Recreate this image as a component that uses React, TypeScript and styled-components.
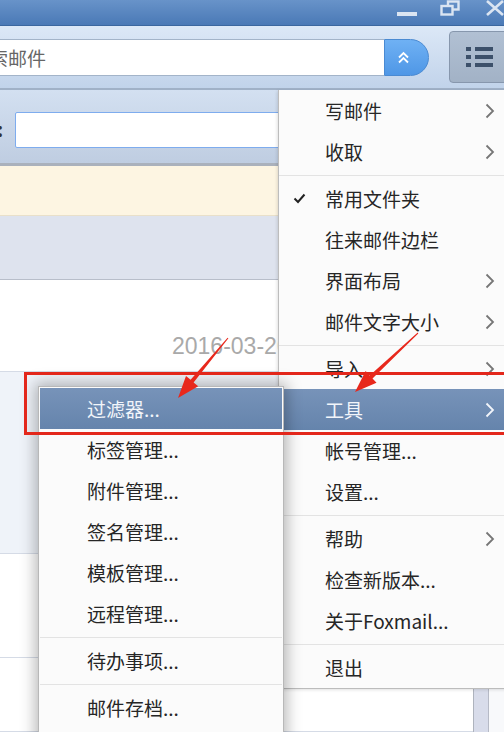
import React from 'react'
import styled, { createGlobalStyle, css } from 'styled-components'

const GlobalStyle = createGlobalStyle`
  html, body {
    margin: 0;
    padding: 0;
    background: #fff;
  }
  body {
    font-family: "Noto Sans CJK SC", "Noto Sans", sans-serif;
  }
  * {
    box-sizing: border-box;
  }
`

type MenuEntry = { label?: string; sub?: boolean; checked?: boolean; active?: boolean; sep?: boolean }

const mainItems: MenuEntry[] = [
  { label: '写邮件', sub: true },
  { label: '收取', sub: true },
  { sep: true },
  { label: '常用文件夹', checked: true },
  { label: '往来邮件边栏' },
  { label: '界面布局', sub: true },
  { label: '邮件文字大小', sub: true },
  { sep: true },
  { label: '导入', sub: true },
  { label: '工具', sub: true, active: true },
  { label: '帐号管理...' },
  { label: '设置...' },
  { sep: true },
  { label: '帮助', sub: true },
  { label: '检查新版本...' },
  { label: '关于Foxmail...' },
  { sep: true },
  { label: '退出' },
]

const toolItems: MenuEntry[] = [
  { label: '过滤器...', active: true },
  { label: '标签管理...' },
  { label: '附件管理...' },
  { label: '签名管理...' },
  { label: '模板管理...' },
  { label: '远程管理...' },
  { sep: true },
  { label: '待办事项...' },
  { sep: true },
  { label: '邮件存档...' },
  { label: '邮件导出...' },
]

const Chevron = ({ light }: { light?: boolean }) => (
  <svg width="10" height="16" viewBox="0 0 10 16">
    <path d="M1.5 1.5 L8 8 L1.5 14.5" fill="none" stroke={light ? '#f2f5fa' : '#767676'} strokeWidth="1.8" />
  </svg>
)

const renderItems = (items: MenuEntry[], sub: boolean) =>
  items.map((it, i) =>
    it.sep ? (
      <Separator key={i} />
    ) : (
      <MenuItem key={i} $active={it.active} $indent={sub ? 47 : 46}>
        {it.checked && (
          <CheckMark width="13" height="11" viewBox="0 0 13 11">
            <path d="M1.5 5.5 L5 9 L11.5 1.5" fill="none" stroke="#222" strokeWidth="2" />
          </CheckMark>
        )}
        <span>{it.label}</span>
        {it.sub && (
          <ChevronSlot>
            <Chevron light={it.active} />
          </ChevronSlot>
        )}
      </MenuItem>
    ),
  )

const App: React.FunctionComponent = () => {
  return (
    <>
      <GlobalStyle />
      <Window>
        <TitleBar>
          <WinControls>
            <svg width="20" height="16" viewBox="0 0 20 16">
              <rect x="0" y="12" width="20" height="4" fill="#dbe5f2" />
            </svg>
            <svg width="20" height="16" viewBox="0 0 20 16">
              <rect x="8" y="1.5" width="10.5" height="8" fill="none" stroke="#dbe5f2" strokeWidth="2.4" />
              <rect x="1.5" y="6" width="11" height="8.5" fill="#5683bd" stroke="#dbe5f2" strokeWidth="2.4" />
            </svg>
            <svg width="20" height="16" viewBox="0 0 20 16">
              <path d="M2 1 L18 15 M18 1 L2 15" stroke="#dbe5f2" strokeWidth="2.6" />
            </svg>
          </WinControls>
        </TitleBar>

        <Toolbar>
          <SearchField>
            <SearchText>搜索邮件</SearchText>
          </SearchField>
          <SearchButton>
            <svg width="11" height="13" viewBox="0 0 11 13">
              <path d="M1 6.5 L5.5 2 L10 6.5 M1 11.5 L5.5 7 L10 11.5" fill="none" stroke="#fff" strokeWidth="1.8" />
            </svg>
          </SearchButton>
          <MenuButton>
            <svg width="27" height="20" viewBox="0 0 27 20">
              <rect x="0" y="0" width="5" height="4" fill="#3c506a" />
              <rect x="9" y="0" width="18" height="4" fill="#3c506a" />
              <rect x="0" y="8" width="5" height="4" fill="#3c506a" />
              <rect x="9" y="8" width="18" height="4" fill="#3c506a" />
              <rect x="0" y="16" width="5" height="4" fill="#3c506a" />
              <rect x="9" y="16" width="18" height="4" fill="#3c506a" />
            </svg>
          </MenuButton>
        </Toolbar>

        <Body>
          <ListPane>
            <FilterBar>
              <FilterLabel>:</FilterLabel>
              <FilterInput />
            </FilterBar>
            <Notice />
            <ListHeader />
            <MailRow $height={92}>
              <MailDate>2016-03-26</MailDate>
            </MailRow>
            <MailRow $height={182} $tinted />
            <MailRow $height={104} />
            <MailRow />
          </ListPane>
          <Splitter />
          <ReadingPane />
        </Body>

        <MainMenu>{renderItems(mainItems, false)}</MainMenu>
        <SubMenu>{renderItems(toolItems, true)}</SubMenu>
        <Callout />
        <ArrowLayer width="504" height="732" viewBox="0 0 504 732">
          <polygon
            points="228.4,338.3 193.6,382.4 198.2,386.2 178,398 186,376 190.6,379.8 227.6,337.7"
            fill="#e8281c"
          />
          <polygon
            points="418.3,333.4 372.5,378.4 376.5,382.8 355,392 365.6,371.1 369.7,375.5 417.7,332.6"
            fill="#e8281c"
          />
        </ArrowLayer>
      </Window>
    </>
  )
}

const Window = styled('div')`
  position: relative;
  width: 504px;
  height: 732px;
  overflow: hidden;
  display: flex;
  flex-direction: column;
  background: #fff;
`

const TitleBar = styled('div')`
  flex: none;
  height: 26px;
  display: flex;
  justify-content: flex-end;
  background: linear-gradient(#6893c9, #4a79b6);
  border-bottom: 1px solid #3b679f;
`

const WinControls = styled('div')`
  display: flex;
  align-items: flex-start;
  gap: 23px;
  margin-right: -1px;

  svg:last-child {
    margin-left: 2px;
  }
`

const Toolbar = styled('div')`
  flex: none;
  height: 64px;
  display: flex;
  align-items: center;
  background: linear-gradient(#dce8f7, #c1d3ea);
  border-bottom: 2px solid #a0b1c7;
`

const SearchField = styled('div')`
  flex: none;
  width: 424px;
  height: 37px;
  margin-left: -40px;
  display: flex;
  align-items: center;
  padding-left: 9px;
  background: #fff;
  border: 1px solid #a3b4c9;
  border-right: none;
`

const SearchText = styled('span')`
  font-size: 19px;
  color: #666;
`

const SearchButton = styled('div')`
  flex: none;
  width: 45px;
  height: 37px;
  display: flex;
  align-items: center;
  justify-content: center;
  padding-right: 6px;
  border-radius: 0 19px 19px 0;
  background: linear-gradient(#6fb1f4, #4f97e6);
  border: 1px solid #4a8ad2;
`

const MenuButton = styled('div')`
  flex: none;
  width: 64px;
  height: 52px;
  margin-left: 20px;
  display: flex;
  align-items: center;
  padding-left: 16px;
  border-radius: 4px;
  background: linear-gradient(#b1c0d3, #a2b2c6);
  border: 1px solid #8797ad;
`

const Body = styled('div')`
  flex: 1;
  display: flex;
  min-height: 0;
`

const ListPane = styled('div')`
  flex: none;
  width: 474px;
  display: flex;
  flex-direction: column;
  border-right: 1px solid #aeb3bd;
`

const FilterBar = styled('div')`
  height: 76px;
  flex: none;
  display: flex;
  align-items: flex-start;
  padding-top: 22px;
  background: linear-gradient(#d3e0f1, #bfcde1);
  border-bottom: 3px solid #aab1bc;
`

const FilterLabel = styled('span')`
  width: 18px;
  margin-left: -3px;
  font-size: 19px;
  line-height: 34px;
  font-weight: bold;
  color: #333;
`

const FilterInput = styled('div')`
  width: 280px;
  height: 36px;
  background: #fff;
  border: 1px solid #7eacee;
  border-radius: 2px;
`

const Notice = styled('div')`
  height: 50px;
  flex: none;
  background: #fdf5e2;
  border-bottom: 1px solid #e9e0ca;
`

const ListHeader = styled('div')`
  height: 64px;
  flex: none;
  background: #dee3ee;
  border-bottom: 1px solid #b8beca;
`

const MailRow = styled('div')<{ $height?: number; $tinted?: boolean }>`
  flex: ${(p) => (p.$height ? 'none' : '1')};
  height: ${(p) => (p.$height ? `${p.$height}px` : 'auto')};
  padding: 53px 0 0 172px;
  background: ${(p) => (p.$tinted ? '#eff3f9' : '#fff')};
  border-bottom: 1px solid #d5dbe6;
`

const MailDate = styled('div')`
  font-family: "Liberation Sans", Arial, sans-serif;
  font-size: 23px;
  line-height: 26px;
  color: #a9a9a9;
  white-space: nowrap;
`

const Splitter = styled('div')`
  flex: none;
  width: 15px;
  background: #d8dcea;
  border-right: 1px solid #b6bac6;
`

const ReadingPane = styled('div')`
  flex: 1;
  background: #f8f9fb;
`

const MainMenu = styled('div')`
  position: absolute;
  left: 278px;
  top: 90px;
  width: 230px;
  display: flex;
  flex-direction: column;
  background: #fbfbfb;
  border-left: 1px solid #bdbdbd;
  border-bottom: 1px solid #bcbcbc;
  box-shadow: -1px 1px 3px rgba(0, 0, 0, 0.12);
  z-index: 1;
`

const SubMenu = styled('div')`
  position: absolute;
  left: 38px;
  top: 386px;
  width: 246px;
  display: flex;
  flex-direction: column;
  padding: 1px;
  background: #fbfbfb;
  border: 1px solid #b8b8b8;
  box-shadow: 0 0 14px 3px rgba(0, 0, 0, 0.28);
  z-index: 2;
`

const MenuItem = styled('div')<{ $active?: boolean; $indent: number }>`
  position: relative;
  height: 41px;
  flex: none;
  display: flex;
  align-items: center;
  padding-left: ${(p) => p.$indent}px;
  font-size: 19px;
  color: #262626;
  white-space: nowrap;

  ${(p) =>
    p.$active &&
    css`
      background: linear-gradient(#7793b9, #6584ac);
      color: #f2f5fa;
    `}
`

const CheckMark = styled('svg')`
  position: absolute;
  left: 14px;
  top: 15px;
`

const ChevronSlot = styled('span')`
  margin-left: auto;
  margin-right: 13px;
  display: flex;
`

const Separator = styled('div')`
  height: 6px;
  flex: none;
  display: flex;
  align-items: center;

  &::before {
    content: '';
    flex: 1;
    height: 1px;
    background: #e3e3e3;
  }
`

const Callout = styled('div')`
  position: absolute;
  left: 24px;
  top: 372px;
  width: 500px;
  height: 63px;
  border: 3px solid #e3271b;
  z-index: 3;
`

const ArrowLayer = styled('svg')`
  position: absolute;
  left: 0;
  top: 0;
  pointer-events: none;
  z-index: 4;
`

export default App
